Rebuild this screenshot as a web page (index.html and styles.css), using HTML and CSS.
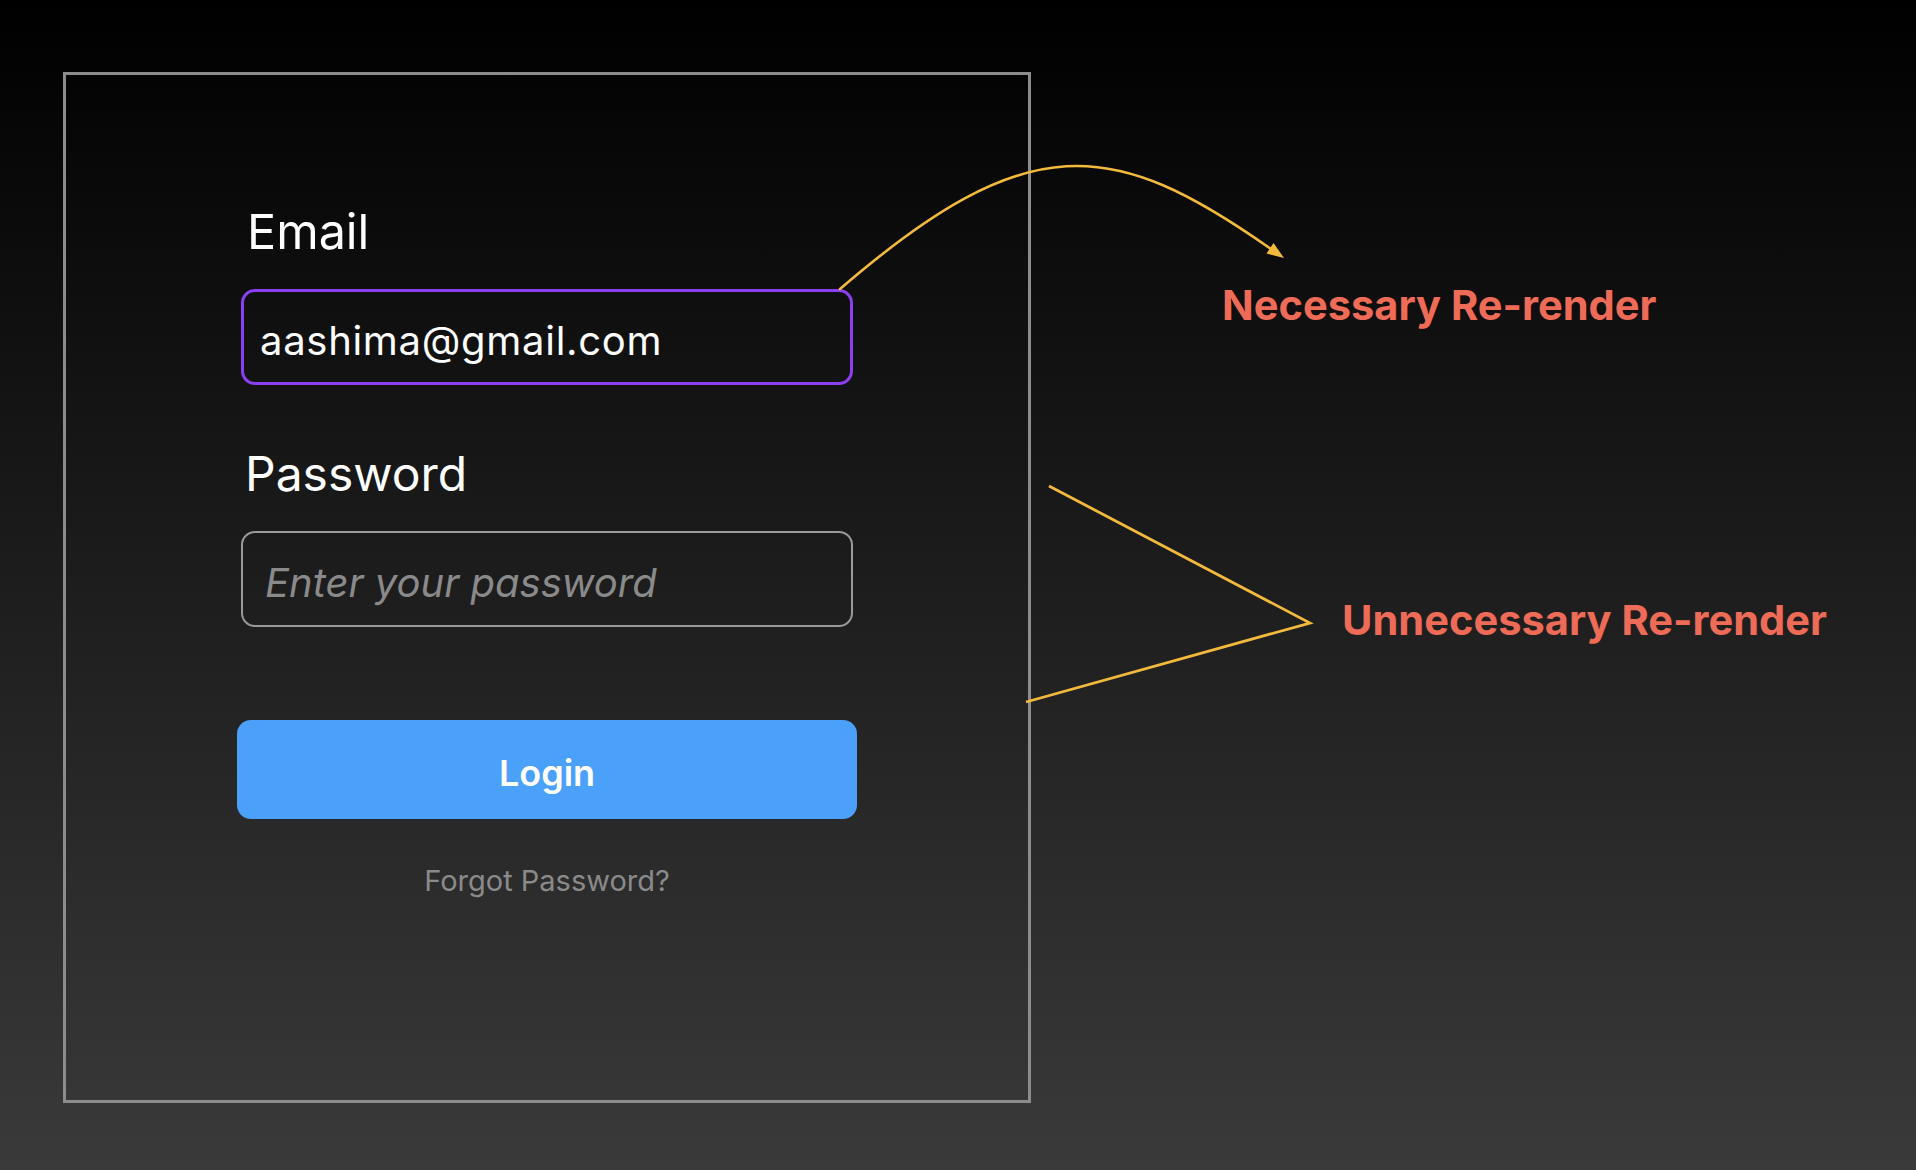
FILE: index.html
```html
<!DOCTYPE html>
<html lang="en">
<head>
<meta charset="utf-8">
<title>Login re-render diagram</title>
<link rel="stylesheet" href="styles.css">
</head>
<body>
<div class="stage">
  <div class="card">
    <form class="form">
      <label class="label label-email" for="email">Email</label>
      <input class="field field-email" id="email" type="email" value="aashima@gmail.com">
      <label class="label label-password" for="password">Password</label>
      <input class="field field-password" id="password" type="password" placeholder="Enter your password">
      <button class="login" type="button">Login</button>
      <div class="forgot">Forgot Password?</div>
    </form>
  </div>

  <svg class="arrows" width="1916" height="1170" viewBox="0 0 1916 1170" aria-hidden="true">
    <path d="M840 289 C1028 127 1112 137 1271 249" fill="none" stroke="#F3B93D" stroke-width="2.6" stroke-linecap="round"/>
    <polygon points="1284,258 1266.5,253.5 1273.5,243" fill="#F3B93D"/>
    <polyline points="1049,486 1310,623 1026,702" fill="none" stroke="#F3B93D" stroke-width="2.8" stroke-linejoin="miter"/>
  </svg>

  <div class="note note-necessary">Necessary Re-render</div>
  <div class="note note-unnecessary">Unnecessary Re-render</div>
</div>
</body>
</html>
```

FILE: styles.css
```css
html, body {
  margin: 0;
  padding: 0;
}

body {
  width: 1916px;
  height: 1170px;
  overflow: hidden;
  background: linear-gradient(to bottom, #000000 0%, #3a3a3a 100%);
  font-family: Inter, "Noto Sans", "Liberation Sans", sans-serif;
  color: #ffffff;
}

.stage {
  position: relative;
  width: 1916px;
  height: 1170px;
  box-sizing: border-box;
  padding: 72px 0 0 63px;
}

.card {
  width: 968px;
  height: 1031px;
  box-sizing: border-box;
  border: 3px solid #8c8c8c;
  display: flex;
  flex-direction: column;
  align-items: center;
  padding-top: 128px;
}

.form {
  width: 620px;
  display: flex;
  flex-direction: column;
  margin: 0;
}

.label {
  font-size: 48px;
  line-height: 58px;
  font-weight: 400;
  color: #ffffff;
  margin-left: 8px;
}

.label-email {
  margin-left: 10px;
  font-size: 48.5px;
}

.label-password {
  margin-top: 60px;
}

.field {
  display: block;
  box-sizing: border-box;
  width: 612px;
  height: 96px;
  margin: 28px 4px 0;
  border-radius: 14px;
  background: transparent;
  color: #ffffff;
  font-family: Inter, "Noto Sans", "Liberation Sans", sans-serif;
  outline: none;
}

.field-email {
  border: 3px solid #8a40f2;
  padding: 7px 16px 0;
  font-size: 40px;
  letter-spacing: 0.7px;
}

.field-password {
  border: 2px solid #9a9a9a;
  padding: 6px 22px 0;
  font-size: 40px;
  font-style: italic;
}

.field-password::placeholder {
  color: #8a8a8a;
  font-style: italic;
  opacity: 1;
}

.login {
  margin-top: 93px;
  width: 620px;
  height: 99px;
  border: none;
  border-radius: 14px;
  background: #4ba1f9;
  color: #ffffff;
  font-family: Inter, "Noto Sans", "Liberation Sans", sans-serif;
  font-size: 36px;
  font-weight: 600;
  padding: 7px 0 0;
  cursor: pointer;
}

.forgot {
  margin-top: 44px;
  font-size: 29px;
  line-height: 35px;
  color: #8a8a8a;
  text-align: center;
}

.arrows {
  position: absolute;
  left: 0;
  top: 0;
  pointer-events: none;
}

.note {
  position: absolute;
  font-size: 41.6px;
  line-height: 42px;
  font-weight: 700;
  color: #ee6b57;
  white-space: nowrap;
}

.note-necessary {
  left: 1222px;
  top: 284px;
}

.note-unnecessary {
  left: 1342px;
  top: 599px;
}
```
